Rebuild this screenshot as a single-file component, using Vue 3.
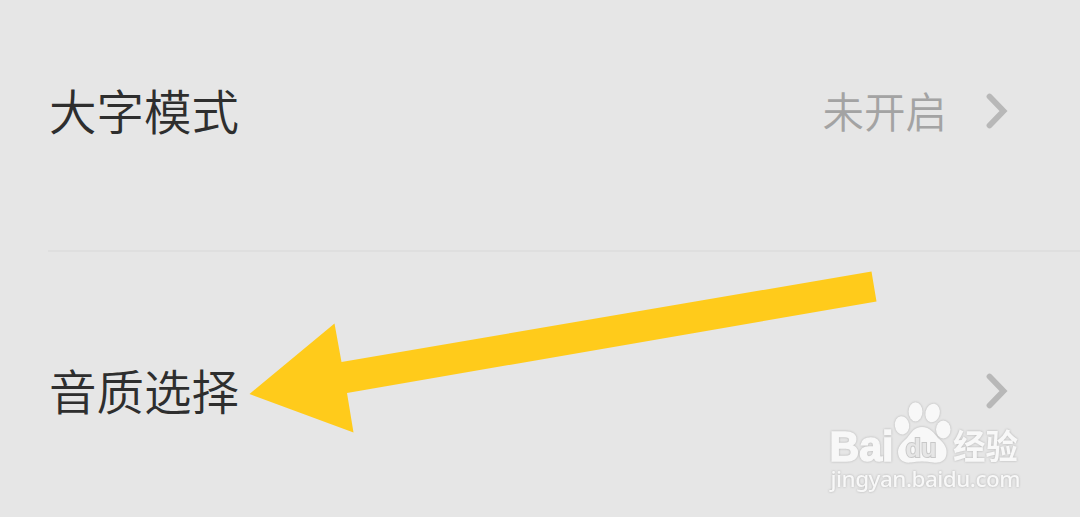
<script setup>
import { ref } from 'vue'

// 设置项列表
const settings = ref([
  { name: '大字模式', value: '未开启' },
  { name: '音质选择', value: '' }
])
</script>

<template>
  <div class="settings-page">
    <div v-for="item in settings" :key="item.name" class="setting-row">
      <span class="setting-name">{{ item.name }}</span>
      <span class="setting-value">{{ item.value }}</span>
      <svg class="chevron" viewBox="0 0 22 36" width="22" height="36">
        <path d="M3.5 3.5 L17.5 18 L3.5 32.5" />
      </svg>
    </div>

    <!-- 指向音质选择的箭头 -->
    <svg class="overlay" viewBox="0 0 1080 517">
      <polygon class="arrow" points="249.5,394 334.5,323.5 341.5,362 871.5,271.5 876.5,301.5 347,393 353.5,432.5" />
    </svg>

    <!-- 水印 -->
    <svg class="overlay watermark" viewBox="0 0 1080 517">
      <text class="brand" x="829.5" y="460.5" textLength="64" lengthAdjust="spacingAndGlyphs">Bai</text>
      <g class="paw">
        <ellipse cx="902" cy="425.3" rx="7.2" ry="9.2" transform="rotate(-8 902 425.3)" />
        <ellipse cx="915.5" cy="411.8" rx="7" ry="9.6" />
        <ellipse cx="932.6" cy="413" rx="7.2" ry="9.4" transform="rotate(12 932.6 413)" />
        <ellipse cx="943.3" cy="429.5" rx="7.3" ry="9" />
        <path d="M922 427 C930 427 934 433 938 438 C943 442 947.5 447 946.5 454 C945.5 461 940 463.5 933 462.5 C926 461 918 461 911 462.5 C903 463.5 898 459 898 452 C898 446 903 442 907 438 C912 432 914 427 922 427 Z" />
      </g>
      <text class="du" x="905.5" y="456.5" textLength="31" lengthAdjust="spacingAndGlyphs">du</text>
      <text class="brand-cn" x="953" y="459" textLength="65" lengthAdjust="spacingAndGlyphs">经验</text>
      <text class="site" x="830.5" y="487" textLength="190" lengthAdjust="spacing">jingyan.baidu.com</text>
    </svg>
  </div>
</template>

<style>
body {
  margin: 0;
  background: #e6e6e6;
}
</style>

<style scoped>
.settings-page {
  position: relative;
  box-sizing: border-box;
  width: 1080px;
  height: 517px;
  overflow: hidden;
  background: #e6e6e6;
  font-family: "Noto Sans CJK SC", sans-serif;
}

.setting-row {
  display: flex;
  align-items: center;
  box-sizing: border-box;
  height: 277px;
  margin-left: 48px;
  padding-right: 72px;
}

/* 首行上半部分已滚出可视区域 */
.setting-row:first-child {
  height: 252px;
  padding-bottom: 28px;
  border-bottom: 2px solid #dfdfdf;
}

.setting-name {
  flex: 1;
  padding: 0 0 2px 1px;
  font-size: 47.5px;
  font-weight: 350;
  line-height: 70px;
  color: #2e2e2e;
}

.setting-value {
  margin-right: 39px;
  padding-bottom: 2px;
  font-size: 41.5px;
  font-weight: 350;
  line-height: 60px;
  color: #a3a3a3;
}

.chevron path {
  fill: none;
  stroke: #b8b8b8;
  stroke-width: 5.8;
  stroke-linecap: round;
}

.overlay {
  position: absolute;
  top: 0;
  left: 0;
  width: 1080px;
  height: 517px;
}

.arrow {
  fill: #ffcb1b;
}

.watermark {
  fill: #f8f8f8;
  filter: drop-shadow(0 0 1px #b0b0b0);
}

.brand {
  font: bold 42px "Liberation Sans", sans-serif;
  stroke: #f8f8f8;
  stroke-width: 1.5;
}

.du {
  font: bold 26px "Liberation Sans", sans-serif;
  fill: #e6e6e6;
  stroke: #c8c8c8;
  stroke-width: 2;
  paint-order: stroke;
}

.brand-cn {
  font: bold 34px "Noto Sans CJK SC", sans-serif;
}

.site {
  font: 500 22.5px "Noto Sans", sans-serif;
}
</style>
